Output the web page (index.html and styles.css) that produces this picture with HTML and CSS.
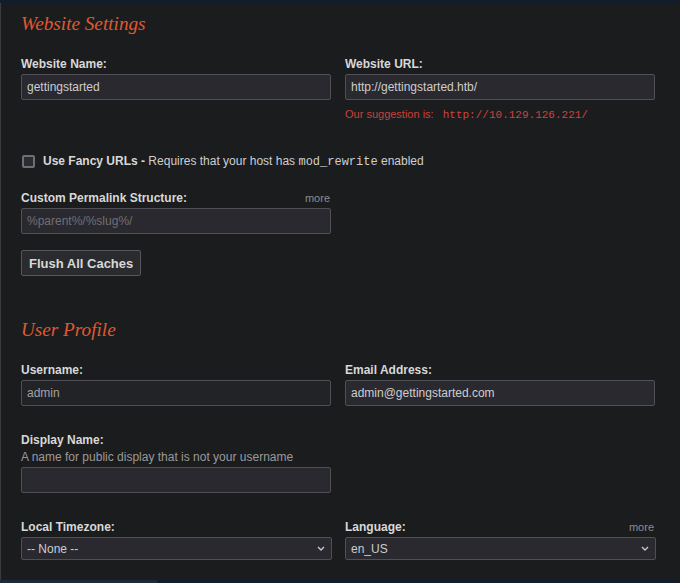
FILE: index.html
```html
<!DOCTYPE html>
<html lang="en">
<head>
<meta charset="utf-8">
<title>Settings</title>
<link rel="stylesheet" href="styles.css">
</head>
<body>
<div class="top-strip"></div>
<main class="page">
  <section class="section">
    <h2 class="section-title">Website Settings</h2>
    <div class="grid first-row">
      <div class="field">
        <label class="label">Website Name:</label>
        <input class="text-input" type="text" value="gettingstarted">
      </div>
      <div class="field">
        <label class="label">Website URL:</label>
        <input class="text-input" type="text" value="http://gettingstarted.htb/">
        <p class="suggest">Our suggestion is: <code class="suggest-url">http://10.129.126.221/</code></p>
      </div>
    </div>
    <div class="check-row">
      <span class="checkbox"></span>
      <span class="check-text"><strong>Use Fancy URLs -</strong> Requires that your host has <code class="mono">mod_rewrite</code> enabled</span>
    </div>
    <div class="field half permalink">
      <div class="label-row">
        <label class="label">Custom Permalink Structure:</label>
        <span class="more">more</span>
      </div>
      <input class="text-input" type="text" placeholder="%parent%/%slug%/">
    </div>
    <button class="btn" type="button">Flush All Caches</button>
  </section>

  <section class="section">
    <h2 class="section-title profile-title">User Profile</h2>
    <div class="grid first-row">
      <div class="field">
        <label class="label">Username:</label>
        <input class="text-input readonly" type="text" value="admin">
      </div>
      <div class="field">
        <label class="label">Email Address:</label>
        <input class="text-input" type="text" value="admin@gettingstarted.com">
      </div>
    </div>
    <div class="field half display-name">
      <label class="label">Display Name:</label>
      <p class="desc">A name for public display that is not your username</p>
      <input class="text-input" type="text" value="">
    </div>
    <div class="grid tz-row">
      <div class="field">
        <label class="label">Local Timezone:</label>
        <div class="select-wrap">
          <select class="select"><option>-- None --</option></select>
          <svg class="chev" width="8" height="5" viewBox="0 0 8 5"><polyline points="1,1 4,4 7,1" fill="none" stroke="#c8c8c8" stroke-width="1.4"/></svg>
        </div>
      </div>
      <div class="field">
        <div class="label-row">
          <label class="label">Language:</label>
          <span class="more">more</span>
        </div>
        <div class="select-wrap">
          <select class="select"><option>en_US</option></select>
          <svg class="chev" width="8" height="5" viewBox="0 0 8 5"><polyline points="1,1 4,4 7,1" fill="none" stroke="#c8c8c8" stroke-width="1.4"/></svg>
        </div>
      </div>
    </div>
  </section>
</main>
<div class="bottom-strip"><div class="thumb"></div></div>
</body>
</html>
```

FILE: styles.css
```css
html, body {
  margin: 0;
  padding: 0;
  background: #1b1c1e;
  width: 680px;
  height: 583px;
  overflow: hidden;
}

body {
  font-family: "Liberation Sans", Arial, sans-serif;
  color: #d6d6d6;
}

.top-strip {
  height: 3px;
  background: #131c2b;
}

.page {
  display: block;
  height: 577px;
  box-sizing: border-box;
  border-left: 1px solid #3a3c40;
  padding: 9px 0 0 20px;
  overflow: hidden;
}

.section-title {
  margin: 0;
  font-family: "Liberation Serif", "Times New Roman", serif;
  font-style: italic;
  font-weight: normal;
  font-size: 19.2px;
  line-height: 24px;
  color: #e0592e;
}

.profile-title {
  margin-top: 42px;
}

.grid {
  display: grid;
  grid-template-columns: 310px 310px;
  column-gap: 14px;
  align-items: start;
}

.first-row {
  margin-top: 21px;
}

.field {
  display: flex;
  flex-direction: column;
}

.half {
  width: 310px;
}

.label {
  display: block;
  font-weight: bold;
  font-size: 12px;
  line-height: 14px;
  color: #d8d8d8;
  margin-bottom: 3px;
}

.label-row {
  display: flex;
  justify-content: space-between;
  align-items: baseline;
}

.more {
  font-size: 11px;
  line-height: 14px;
  color: #8c8c8c;
  margin-right: 1px;
}

.text-input {
  box-sizing: border-box;
  width: 310px;
  height: 26px;
  margin: 0;
  padding: 0 5px;
  background: #2a2930;
  border: 1px solid #4f4f55;
  border-radius: 2px;
  font-family: "Liberation Sans", Arial, sans-serif;
  font-size: 12px;
  color: #cdcdcd;
  outline: none;
}

.text-input::placeholder {
  color: #6f6f73;
}

.text-input.readonly {
  background: #222326;
  color: #a2a2a2;
}

.suggest {
  margin: 7px 0 0;
  font-size: 11px;
  line-height: 14px;
  color: #c9423c;
}

.suggest-url {
  font-family: "Liberation Mono", "Courier New", monospace;
  font-size: 11px;
  margin-left: 6px;
  color: #cc4440;
}

.check-row {
  margin-top: 32px;
  display: flex;
  align-items: center;
  gap: 8px;
  font-size: 12px;
  line-height: 14px;
}

.checkbox {
  box-sizing: border-box;
  width: 13px;
  height: 13px;
  margin-left: 1px;
  border: 2px solid #6e6e74;
  border-radius: 2px;
  background: #2b2b32;
}

.check-text {
  color: #cfcfcf;
}

.check-text strong {
  color: #d8d8d8;
}

.mono {
  font-family: "Liberation Mono", "Courier New", monospace;
  font-size: 12px;
}

.permalink {
  margin-top: 22px;
}

.btn {
  display: block;
  margin-top: 16px;
  box-sizing: border-box;
  height: 26px;
  padding: 0 7px;
  background: #2a2b2f;
  border: 1px solid #56565b;
  border-radius: 2px;
  font-family: "Liberation Sans", Arial, sans-serif;
  font-weight: bold;
  font-size: 13px;
  color: #d8d8d8;
}

.display-name {
  margin-top: 27px;
}

.desc {
  margin: 0 0 3px;
  font-size: 12px;
  line-height: 14px;
  color: #9a9a9a;
}

.tz-row {
  margin-top: 27px;
}

.select-wrap {
  position: relative;
  width: 311px;
}

.select {
  -webkit-appearance: none;
  appearance: none;
  box-sizing: border-box;
  width: 311px;
  height: 23px;
  margin: 0;
  padding: 0 5px;
  background: #2a2930;
  border: 1px solid #4f4f55;
  border-radius: 2px;
  font-family: "Liberation Sans", Arial, sans-serif;
  font-size: 12px;
  color: #cdcdcd;
  outline: none;
}

.chev {
  position: absolute;
  right: 7px;
  top: 9px;
}

.bottom-strip {
  height: 3px;
  background: #131c2b;
}

.thumb {
  width: 157px;
  height: 3px;
  background: #1f2938;
}
```
